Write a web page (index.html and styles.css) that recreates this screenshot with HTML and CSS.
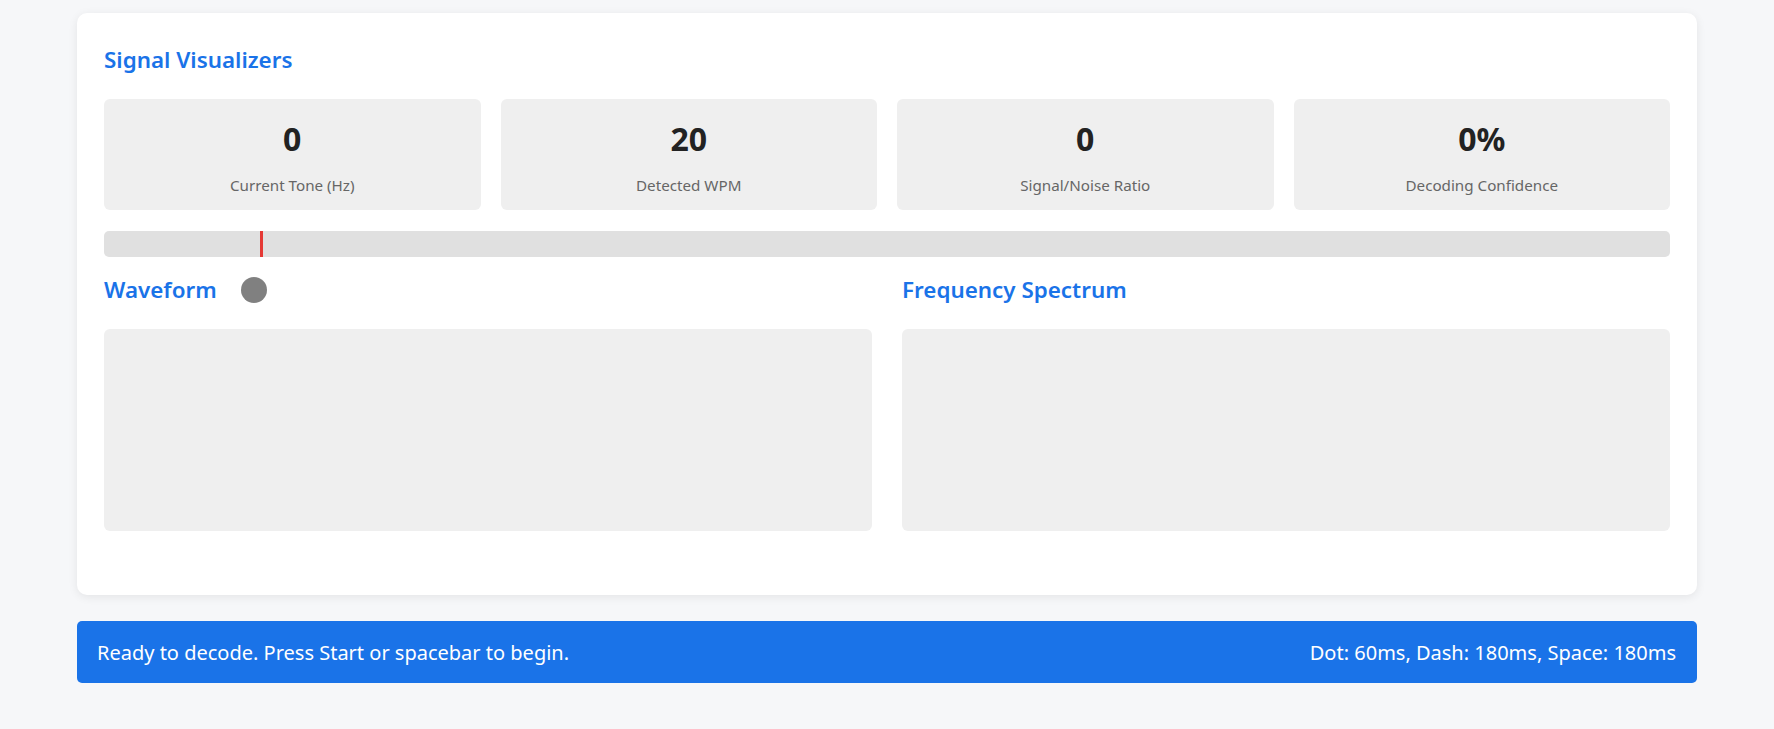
FILE: index.html
```html
<!DOCTYPE html>
<html lang="en">
<head>
<meta charset="utf-8">
<title>Signal Visualizers</title>
<link rel="stylesheet" href="styles.css">
</head>
<body>
<div class="container">
  <section class="card">
    <h2 class="section-title">Signal Visualizers</h2>
    <div class="stats">
      <div class="stat">
        <div class="stat-value">0</div>
        <div class="stat-label">Current Tone (Hz)</div>
      </div>
      <div class="stat">
        <div class="stat-value">20</div>
        <div class="stat-label">Detected WPM</div>
      </div>
      <div class="stat">
        <div class="stat-value">0</div>
        <div class="stat-label">Signal/Noise Ratio</div>
      </div>
      <div class="stat">
        <div class="stat-value">0%</div>
        <div class="stat-label">Decoding Confidence</div>
      </div>
    </div>
    <div class="tuning-bar">
      <div class="tuning-marker" style="left: 156px"></div>
    </div>
    <div class="viz-grid">
      <div class="viz-col">
        <div class="viz-head">
          <h3 class="viz-title">Waveform</h3>
          <span class="signal-dot"></span>
        </div>
        <div class="viz-canvas"></div>
      </div>
      <div class="viz-col">
        <div class="viz-head">
          <h3 class="viz-title">Frequency Spectrum</h3>
        </div>
        <div class="viz-canvas"></div>
      </div>
    </div>
  </section>
  <div class="status-bar">
    <span class="status-text">Ready to decode. Press Start or spacebar to begin.</span>
    <span class="status-timing">Dot: 60ms, Dash: 180ms, Space: 180ms</span>
  </div>
</div>
</body>
</html>
```
FILE: styles.css
```css
* { box-sizing: border-box; }

html, body {
  margin: 0;
  padding: 0;
  background: #f6f7f9;
  font-family: "Noto Sans", "Open Sans", sans-serif;
  color: #222;
}

.container {
  width: 1620px;
  margin: 0 auto;
  padding-top: 13px;
}

.card {
  background: #fff;
  border-radius: 10px;
  box-shadow: 0 2px 10px rgba(0, 0, 0, 0.08);
  padding: 27px 27px 64px;
}

.section-title {
  margin: 8px 0 27px;
  font-size: 22.4px;
  line-height: 24px;
  font-weight: 600;
  color: #1a73e8;
}

.stats {
  display: grid;
  grid-template-columns: repeat(4, 1fr);
  gap: 20px;
}

.stat {
  background: #efefef;
  border-radius: 6px;
  padding: 20px 10px 15px;
  text-align: center;
  height: 111px;
}

.stat-value {
  font-size: 32px;
  line-height: 40px;
  font-weight: 700;
  color: #222;
}

.stat-label {
  margin-top: 16px;
  font-size: 15.2px;
  line-height: 20px;
  color: #666;
}

.tuning-bar {
  position: relative;
  margin-top: 21px;
  height: 26px;
  background: #e0e0e0;
  border-radius: 5px;
}

.tuning-marker {
  position: absolute;
  top: 0;
  bottom: 0;
  width: 3px;
  background: #e53935;
}

.viz-grid {
  display: grid;
  grid-template-columns: 1fr 1fr;
  gap: 30px;
  margin-top: 18px;
}

.viz-head {
  display: flex;
  align-items: center;
  gap: 24px;
  height: 30px;
  margin-bottom: 24px;
}

.viz-title {
  margin: 0;
  font-size: 22.4px;
  line-height: 30px;
  font-weight: 600;
  color: #1a73e8;
}

.signal-dot {
  width: 26px;
  height: 26px;
  border-radius: 50%;
  background: #808080;
}

.viz-canvas {
  height: 202px;
  background: #efefef;
  border-radius: 6px;
}

.status-bar {
  margin-top: 26px;
  display: flex;
  justify-content: space-between;
  align-items: center;
  height: 62px;
  padding: 0 21px 0 20px;
  background: #1a73e8;
  border-radius: 5px;
  color: #fff;
  font-size: 20px;
}
```
